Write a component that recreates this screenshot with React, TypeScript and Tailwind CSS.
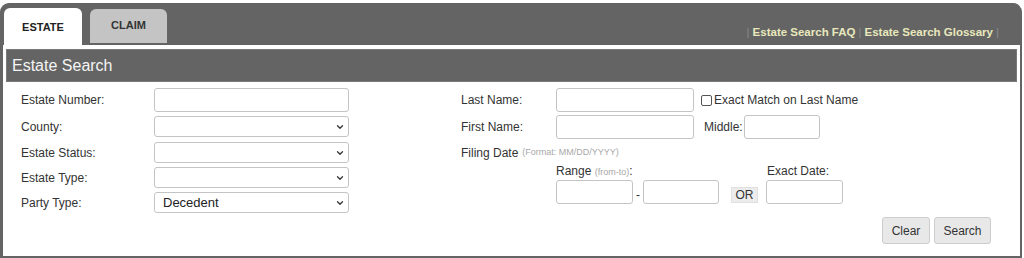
import { ChevronDown } from 'lucide-react';

function TextBox({ className }: { className: string }) {
    return <input type="text" className={`block bg-white border border-[#c4c4c4] rounded-[3px] outline-none ${className}`} />;
}

function Dropdown({ value }: { value?: string }) {
    return (
        <div className="relative w-[195px] h-[21px] border border-[#c4c4c4] rounded-[3px] bg-white flex items-center pl-[8px]">
            <span className="text-[13px] text-[#222]">{value}</span>
            <ChevronDown className="absolute right-[3px] top-[5px] w-[10px] h-[10px] text-[#333]" strokeWidth={3} />
        </div>
    );
}

const leftRows = [
    { label: 'Estate Number:', kind: 'text' },
    { label: 'County:', kind: 'select' },
    { label: 'Estate Status:', kind: 'select' },
    { label: 'Estate Type:', kind: 'select' },
    { label: 'Party Type:', kind: 'select', value: 'Decedent' },
];

export default function App() {
    return (
        <div className="w-[1024px] h-[258px] bg-white pt-[3px] overflow-hidden font-['Liberation_Sans',Arial,sans-serif]">
            <div className="w-[1022px] h-[255px] bg-[#646464] rounded-t-[9px] pl-[3px] pr-[2px] pb-[2px] flex flex-col">
                {/* tabs + links */}
                <div className="h-[42px] flex items-end">
                    <div className="ml-[1px] w-[78px] h-[37px] bg-white rounded-t-[6px] flex items-center justify-center pt-[1px] text-[11px] font-bold text-[#222]">
                        ESTATE
                    </div>
                    <div className="ml-[8px] mb-[2px] w-[77px] h-[34px] bg-[#c4c4c4] rounded-t-[6px] flex items-center justify-center pb-[1px] text-[11px] font-bold text-[#333]">
                        CLAIM
                    </div>
                    <div className="ml-auto mr-[18px] mb-[4px] flex items-center text-[11.5px] font-bold text-[#e8e8bc]">
                        <span className="text-[#8a8a8a] font-normal mx-[3px]">|</span>
                        <span>Estate Search FAQ</span>
                        <span className="text-[#8a8a8a] font-normal mx-[3px]">|</span>
                        <span>Estate Search Glossary</span>
                        <span className="text-[#8a8a8a] font-normal mx-[3px]">|</span>
                    </div>
                </div>

                {/* panel */}
                <div className="flex-1 bg-white pt-[4px] px-[3px]">
                    <div className="h-[33px] bg-[#646464] border border-[#7a7a7a] flex items-center pl-[5px] text-[16px] text-[#f4f4f4]">
                        Estate Search
                    </div>

                    <div className="flex pt-[6px] text-[12px] text-[#333]">
                        {/* left column */}
                        <div className="w-[455px] pl-[15px] flex flex-col">
                            {leftRows.map((r, i) => (
                                <div key={r.label} className={`flex items-center ${i === 0 ? 'mb-[4px]' : i === 1 ? 'mb-[5px]' : 'mb-[4px]'}`}>
                                    <span className="w-[133px]">{r.label}</span>
                                    {r.kind === 'text' ? <TextBox className="w-[195px] h-[24px]" /> : <Dropdown value={r.value} />}
                                </div>
                            ))}
                        </div>

                        {/* right column */}
                        <div className="w-[530px] flex flex-col">
                            <div className="flex items-center">
                                <span className="w-[95px]">Last Name:</span>
                                <TextBox className="w-[138px] h-[24px]" />
                                <span className="ml-[7px] w-[11px] h-[11px] border border-[#555] rounded-[2px] bg-white"></span>
                                <span className="ml-[2px]">Exact Match on Last Name</span>
                            </div>
                            <div className="flex items-center mt-[3px]">
                                <span className="w-[95px]">First Name:</span>
                                <TextBox className="w-[138px] h-[24px]" />
                                <span className="ml-[10px] w-[40px]">Middle:</span>
                                <TextBox className="w-[76px] h-[24px]" />
                            </div>
                            <div className="flex items-center mt-[7px] h-[14px]">
                                <span>Filing Date</span>
                                <span className="ml-[4px] text-[9px] text-[#a8a8a8]">(Format: MM/DD/YYYY)</span>
                            </div>
                            <div className="flex items-center mt-[4px] h-[14px] pl-[95px]">
                                <span className="w-[211px]">
                                    Range <span className="text-[9px] text-[#a8a8a8]">(from-to)</span>:
                                </span>
                                <span>Exact Date:</span>
                            </div>
                            <div className="flex items-start mt-[2px] pl-[95px]">
                                <TextBox className="w-[77px] h-[24px]" />
                                <span className="w-[10px] mt-[6px] text-center">-</span>
                                <TextBox className="w-[76px] h-[24px]" />
                                <span className="ml-[12px] mt-[7px] w-[27px] h-[16px] bg-[#ececec] border border-[#e0e0e0] flex items-center justify-center text-[12px]">OR</span>
                                <TextBox className="ml-[8px] w-[77px] h-[24px]" />
                            </div>
                            <div className="flex justify-end gap-[4px] mt-[13px]">
                                <button className="w-[48px] h-[27px] bg-[#e8e8e8] border border-[#cdcdcd] rounded-[3px] text-[12px] text-[#333]">Clear</button>
                                <button className="w-[57px] h-[27px] bg-[#e8e8e8] border border-[#cdcdcd] rounded-[3px] text-[12px] text-[#333]">Search</button>
                            </div>
                        </div>
                    </div>
                </div>
            </div>
        </div>
    );
}
